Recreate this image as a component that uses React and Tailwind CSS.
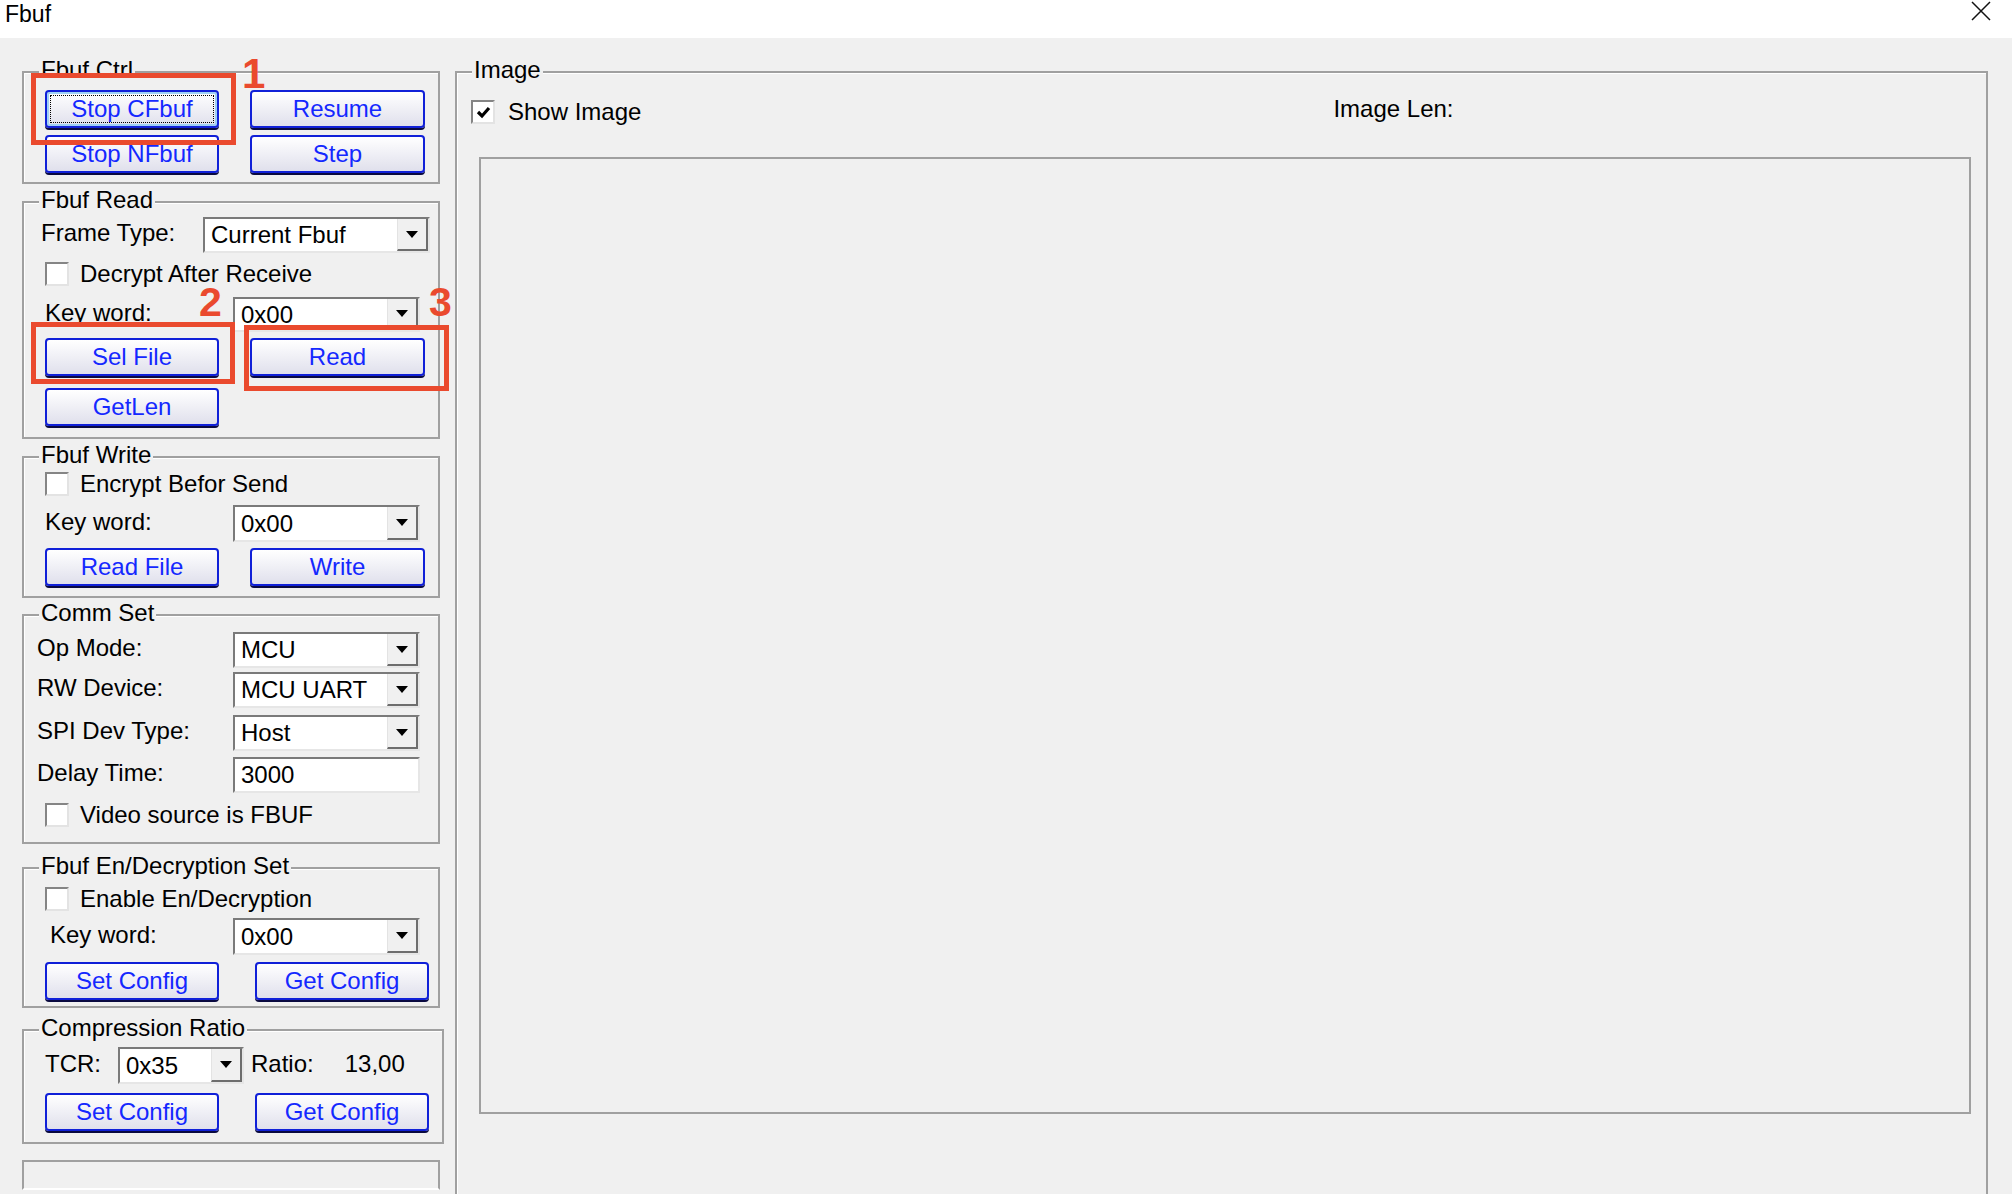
import React from 'react';

function Btn({ label, w, focus }) {
  return (
    <div
      className={`${w} h-[38px] flex items-center justify-center rounded-[4px] border-2 border-[#1020d8] bg-linear-to-b from-white to-[#e0e0ec] text-[#1428ff] text-[24px] leading-none ${
        focus
          ? 'shadow-[0_2px_0_#0a0a40,inset_0_0_0_2px_#9fd0f5] outline-1 outline-dotted outline-black outline-offset-[-6px]'
          : 'shadow-[0_2px_0_#0a0a40]'
      }`}
    >
      {label}
    </div>
  );
}

function Combo({ value, w, h }) {
  return (
    <div className={`${w} ${h} flex border-2 border-t-[#7a7a7a] border-l-[#7a7a7a] border-r-[#e6e6e6] border-b-[#e6e6e6] bg-white`}>
      <div className="flex-1 flex items-center pl-[6px] text-[24px] leading-none whitespace-nowrap overflow-hidden">{value}</div>
      <div className="w-[31px] flex items-center justify-center bg-[#f0f0f0] border-l border-l-[#e3e3e3] border-r-2 border-b-2 border-r-[#6d6d6d] border-b-[#6d6d6d]">
        <svg width="12" height="7" viewBox="0 0 12 7">
          <path d="M0 0h12L6 7z" fill="#000" />
        </svg>
      </div>
    </div>
  );
}

function Check({ checked }) {
  return (
    <div className="w-[24px] h-[24px] shrink-0 flex items-center justify-center bg-white border-2 border-t-[#858585] border-l-[#858585] border-r-[#e3e3e3] border-b-[#e3e3e3]">
      {checked && (
        <svg width="15" height="13" viewBox="0 0 15 13">
          <path d="M2 6l4 4 7-8" stroke="#000" strokeWidth="3.2" fill="none" />
        </svg>
      )}
    </div>
  );
}

function Group({ title, className, children }) {
  return (
    <div className={`border-2 border-[#a0a0a0] shadow-[inset_1px_1px_0_#ffffff] ${className}`}>
      <div className="-mt-[13px] ml-[15px] w-fit px-[2px] bg-[#f0f0f0] text-[24px] leading-[20px]">{title}</div>
      {children}
    </div>
  );
}

export default function App() {
  return (
    <div className="relative w-[2012px] h-[1194px] overflow-hidden bg-[#f0f0f0] text-black leading-none font-['Liberation_Sans',Arial,sans-serif]">
      {/* title bar */}
      <div className="h-[38px] bg-white flex justify-between">
        <div className="pl-[5px] pt-[1px] text-[23px] leading-[26px]">Fbuf</div>
        <svg className="mt-[1px] mr-[21px]" width="20" height="20" viewBox="0 0 20 20">
          <path d="M1 1L19 19M19 1L1 19" stroke="#111" strokeWidth="1.5" />
        </svg>
      </div>

      <div className="flex items-start pl-[22px]">
        {/* left controls */}
        <div className="w-[422px] pt-[33px] flex flex-col text-[24px] leading-none">
          <Group title="Fbuf Ctrl" className="w-[418px] h-[113px]">
            <div className="flex mt-[10px] ml-[21px] gap-[31px]">
              <Btn w="w-[174px]" label="Stop CFbuf" focus />
              <Btn w="w-[175px]" label="Resume" />
            </div>
            <div className="flex mt-[7px] ml-[21px] gap-[31px]">
              <Btn w="w-[174px]" label="Stop NFbuf" />
              <Btn w="w-[175px]" label="Step" />
            </div>
          </Group>

          <Group title="Fbuf Read" className="w-[418px] h-[238px] mt-[17px]">
            <div className="flex items-center mt-[7px] ml-[17px]">
              <div className="w-[162px] pb-[4px]">Frame Type:</div>
              <Combo w="w-[227px]" h="h-[36px]" value="Current Fbuf" />
            </div>
            <div className="flex items-center gap-[11px] mt-[9px] ml-[21px]">
              <Check />
              <span>Decrypt After Receive</span>
            </div>
            <div className="flex items-center mt-[11px] ml-[21px]">
              <div className="w-[188px] pb-[4px]">Key word:</div>
              <Combo w="w-[187px]" h="h-[35px]" value="0x00" />
            </div>
            <div className="flex mt-[6px] ml-[21px] gap-[31px]">
              <Btn w="w-[174px]" label="Sel File" />
              <Btn w="w-[175px]" label="Read" />
            </div>
            <div className="flex mt-[12px] ml-[21px]">
              <Btn w="w-[174px]" label="GetLen" />
            </div>
          </Group>

          <Group title="Fbuf Write" className="w-[418px] h-[142px] mt-[17px]">
            <div className="flex items-center gap-[11px] mt-[7px] ml-[21px]">
              <Check />
              <span>Encrypt Befor Send</span>
            </div>
            <div className="flex items-center mt-[9px] ml-[21px]">
              <div className="w-[188px] pb-[4px]">Key word:</div>
              <Combo w="w-[187px]" h="h-[37px]" value="0x00" />
            </div>
            <div className="flex mt-[6px] ml-[21px] gap-[31px]">
              <Btn w="w-[174px]" label="Read File" />
              <Btn w="w-[175px]" label="Write" />
            </div>
          </Group>

          <Group title="Comm Set" className="w-[418px] h-[230px] mt-[16px]">
            <div className="flex items-center mt-[9px] ml-[13px]">
              <div className="w-[196px] pb-[4px]">Op Mode:</div>
              <Combo w="w-[187px]" h="h-[36px]" value="MCU" />
            </div>
            <div className="flex items-center mt-[4px] ml-[13px]">
              <div className="w-[196px] pb-[4px]">RW Device:</div>
              <Combo w="w-[187px]" h="h-[36px]" value="MCU UART" />
            </div>
            <div className="flex items-center mt-[7px] ml-[13px]">
              <div className="w-[196px] pb-[4px]">SPI Dev Type:</div>
              <Combo w="w-[187px]" h="h-[36px]" value="Host" />
            </div>
            <div className="flex items-center mt-[6px] ml-[13px]">
              <div className="w-[196px] pb-[4px]">Delay Time:</div>
              <div className="w-[187px] h-[36px] flex items-center pl-[6px] bg-white border-2 border-t-[#7a7a7a] border-l-[#7a7a7a] border-r-[#e6e6e6] border-b-[#e6e6e6] leading-none">
                3000
              </div>
            </div>
            <div className="flex items-center gap-[11px] mt-[10px] ml-[21px]">
              <Check />
              <span>Video source is FBUF</span>
            </div>
          </Group>

          <Group title="Fbuf En/Decryption Set" className="w-[418px] h-[141px] mt-[23px]">
            <div className="flex items-center gap-[11px] mt-[11px] ml-[21px]">
              <Check />
              <span>Enable En/Decryption</span>
            </div>
            <div className="flex items-center mt-[7px] ml-[26px]">
              <div className="w-[183px] pb-[4px]">Key word:</div>
              <Combo w="w-[187px]" h="h-[37px]" value="0x00" />
            </div>
            <div className="flex mt-[7px] ml-[21px] gap-[36px]">
              <Btn w="w-[174px]" label="Set Config" />
              <Btn w="w-[174px]" label="Get Config" />
            </div>
          </Group>

          <Group title="Compression Ratio" className="w-[422px] h-[115px] mt-[21px]">
            <div className="flex items-center mt-[9px] ml-[21px]">
              <div className="w-[73px] pb-[4px]">TCR:</div>
              <Combo w="w-[126px]" h="h-[37px]" value="0x35" />
              <div className="ml-[7px] pb-[4px]">Ratio:</div>
              <div className="ml-[31px] pb-[4px]">13,00</div>
            </div>
            <div className="flex mt-[9px] ml-[21px] gap-[36px]">
              <Btn w="w-[174px]" label="Set Config" />
              <Btn w="w-[174px]" label="Get Config" />
            </div>
          </Group>

          <div className="w-[418px] h-[30px] mt-[16px] border-2 border-[#a0a0a0] border-b-white" />
        </div>

        {/* image panel */}
        <Group title="Image" className="ml-[11px] mt-[33px] w-[1533px] h-[1200px] text-[24px] leading-none">
          <div className="flex items-center h-[24px] mt-[20px] ml-[14px]">
            <Check checked />
            <span className="ml-[13px]">Show Image</span>
            <span className="ml-[692px] mb-[7px]">Image Len:</span>
          </div>
          <div className="mt-[33px] ml-[22px] w-[1492px] h-[957px] border-2 border-[#a0a0a0]" />
        </Group>
      </div>

      {/* red annotations */}
      <div className="absolute left-[31px] top-[73px] w-[205px] h-[72px] border-[5px] border-[#ea4a2e]" />
      <div className="absolute left-[242px] top-[53px] text-[42px] leading-none font-bold text-[#ea4a2e]">1</div>
      <div className="absolute left-[31px] top-[322px] w-[204px] h-[62px] border-[5px] border-[#ea4a2e]" />
      <div className="absolute left-[199px] top-[282px] text-[41px] leading-none font-bold text-[#ea4a2e]">2</div>
      <div className="absolute left-[244px] top-[325px] w-[205px] h-[66px] border-[5px] border-[#ea4a2e]" />
      <div className="absolute left-[429px] top-[282px] text-[41px] leading-none font-bold text-[#ea4a2e]">3</div>
    </div>
  );
}
